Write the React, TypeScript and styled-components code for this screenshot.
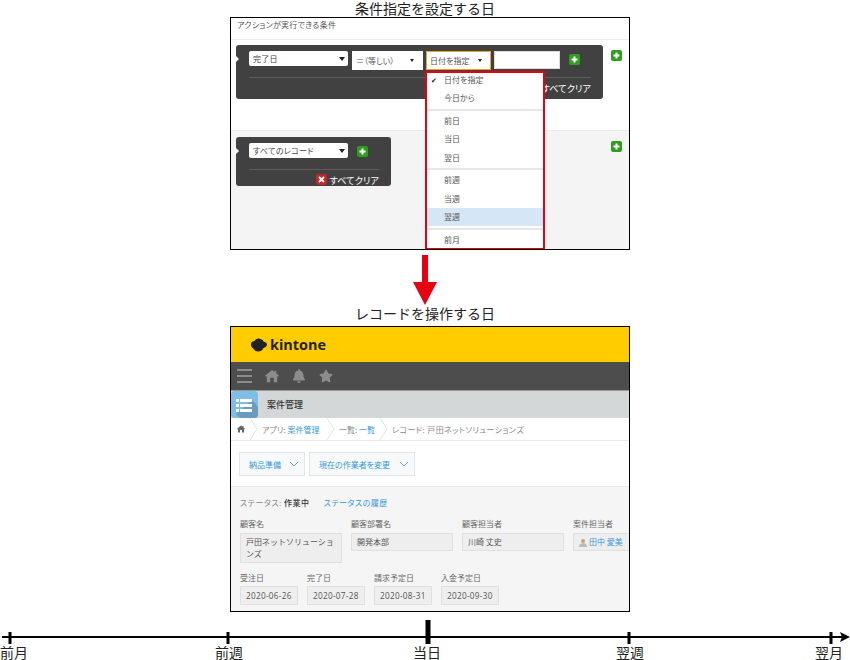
import React from 'react';
import styled, { createGlobalStyle } from 'styled-components';
import { FaBell, FaStar } from 'react-icons/fa';

const GlobalStyle = createGlobalStyle`
  html, body {
    margin: 0;
    padding: 0;
    background: #fff;
  }

  body {
    width: 850px;
    height: 660px;
    overflow: hidden;
    font-family: 'Noto Sans CJK JP', 'Noto Sans', sans-serif;
    font-feature-settings: 'palt';
  }
`;

const Page = styled.div`
  width: 850px;
  height: 660px;
  display: flex;
  flex-direction: column;
  align-items: center;
`;

const Title = styled.div`
  height: 17px;
  line-height: 17px;
  font-size: 14px;
  color: #222;
  font-feature-settings: normal;
`;

const Frame = styled.div<{ $height: number; $top?: number }>`
  position: relative;
  flex: none;
  box-sizing: border-box;
  width: 400px;
  height: ${(p) => p.$height}px;
  margin-top: ${(p) => p.$top ?? 0}px;
  margin-left: 10px;
  border: 1px solid #000;
  overflow: hidden;
  font-size: 8px;
  color: #555;
`;

const ConditionHeader = styled.div`
  height: 22px;
  padding-left: 6px;
  line-height: 12px;
  padding-top: 1px;
  box-sizing: border-box;
  border-bottom: 1px solid #ececec;
  letter-spacing: 0.25px;
`;

const ConditionSection = styled.div<{ $height: number; $grey?: boolean }>`
  box-sizing: border-box;
  height: ${(p) => p.$height}px;
  display: flex;
  align-items: flex-start;
  justify-content: space-between;
  padding: ${(p) => (p.$grey ? '6px 7px 0 5px' : '5px 7px 0 5px')};
  background: ${(p) => (p.$grey ? '#f4f4f4' : '#fff')};
  border-top: ${(p) => (p.$grey ? '1px solid #ececec' : 'none')};
`;

const DarkPanel = styled.div<{ $width: number; $height: number }>`
  position: relative;
  box-sizing: border-box;
  width: ${(p) => p.$width}px;
  height: ${(p) => p.$height}px;
  padding: 6px 12px 0 13px;
  background: #414141;
  border-radius: 3px;

  &::before {
    content: '';
    position: absolute;
    left: 0;
    top: 11px;
    border-left: 3px solid #fff;
    border-top: 3px solid transparent;
    border-bottom: 3px solid transparent;
  }
`;

const FilterRow = styled.div`
  display: flex;
  align-items: flex-start;
  height: 26px;
`;

const FieldSelect = styled.div<{ $width: number; $margin?: number }>`
  box-sizing: border-box;
  width: ${(p) => p.$width}px;
  height: 15px;
  margin-right: ${(p) => p.$margin ?? 0}px;
  padding: 0 3px 0 4px;
  display: flex;
  align-items: center;
  justify-content: space-between;
  background: #fff;
  border-radius: 2px;
  color: #444;
  line-height: 13px;
  letter-spacing: 0.3px;
`;

const DropArrow = styled.span<{ $size?: number }>`
  width: 0;
  height: 0;
  border-left: ${(p) => p.$size ?? 3}px solid transparent;
  border-right: ${(p) => p.$size ?? 3}px solid transparent;
  border-top: ${(p) => (p.$size ?? 3) + 1}px solid #222;
`;

const OpSelect = styled.div<{ $width: number; $margin: number; $active?: boolean }>`
  box-sizing: border-box;
  width: ${(p) => p.$width}px;
  height: 19px;
  margin-right: ${(p) => p.$margin}px;
  padding: 0 8px 0 3px;
  display: flex;
  align-items: center;
  justify-content: space-between;
  background: #fff;
  border: 1px solid ${(p) => (p.$active ? '#e6a92e' : '#fff')};
  color: #555;
`;

const ValueInput = styled.div`
  box-sizing: border-box;
  width: 66px;
  height: 18px;
  margin-right: 9px;
  background: #fff;
  border: 1px solid #ddd;
`;

const IconSquare = styled.span<{ $color: string; $size?: number; $top?: number }>`
  flex: none;
  display: inline-flex;
  align-items: center;
  justify-content: center;
  width: ${(p) => p.$size ?? 11}px;
  height: ${(p) => p.$size ?? 11}px;
  margin-top: ${(p) => p.$top ?? 0}px;
  border-radius: 2px;
  background: ${(p) => p.$color};
`;

const PanelDivider = styled.div`
  height: 1px;
  background: #5e5e5e;
`;

const ClearRow = styled.div`
  display: flex;
  justify-content: flex-end;
  align-items: center;
  gap: 3px;
  height: 19px;
  padding-right: 0;
  font-size: 9.2px;
  color: #fff;
`;

const Menu = styled.div`
  position: absolute;
  left: 194px;
  top: 53px;
  box-sizing: border-box;
  width: 120px;
  height: 179px;
  background: #fff;
  border: 2px solid #e60012;
  overflow: hidden;
`;

const MenuList = styled.div`
  margin-top: -2px;
`;

const MenuItem = styled.div<{ $hover?: boolean }>`
  position: relative;
  height: 18.3px;
  line-height: 18px;
  padding-left: 17px;
  background: ${(p) => (p.$hover ? '#d5e7f6' : 'transparent')};
  color: #555;
`;

const MenuCheck = styled.span`
  position: absolute;
  left: 4px;
  top: 0;
  color: #222;
  font-size: 7px;
`;

const MenuSeparator = styled.div`
  height: 2px;
  margin: 1.25px 0;
  background: #e6e6e6;
`;

const ArrowBox = styled.svg`
  display: block;
  flex: none;
  margin-top: 5px;
`;

const TopBar = styled.div`
  height: 35px;
  padding-left: 19px;
  display: flex;
  align-items: center;
  gap: 3px;
  background: #ffcc00;
`;

const Wordmark = styled.span`
  font-family: 'Open Sans', sans-serif;
  font-size: 14.4px;
  font-weight: 700;
  color: #222;
`;

const NavBar = styled.div`
  height: 28px;
  padding-left: 6px;
  display: flex;
  align-items: center;
  gap: 13px;
  background: #4d4d4d;
  border-bottom: 1px solid #999;
  color: #8c8c8c;
`;

const AppBar = styled.div`
  position: relative;
  height: 27px;
  display: flex;
  align-items: center;
  padding-left: 36px;
  background: #d3d7d8;
  font-size: 9px;
  font-weight: 500;
  color: #333;
`;

const AppIcon = styled.svg`
  position: absolute;
  left: 0;
  top: 0;
`;

const Breadcrumb = styled.div`
  box-sizing: border-box;
  height: 23px;
  display: flex;
  align-items: center;
  padding-left: 6px;
  gap: 0;
  border-bottom: 1px solid #e8e8e8;
  background: #fff;
  color: #888;
`;

const HomeCrumb = styled.span`
  display: flex;
  width: 12px;
`;

const Crumb = styled.span<{ $width: number; $spacing?: number }>`
  box-sizing: border-box;
  width: ${(p) => p.$width}px;
  padding-left: 3px;
  white-space: nowrap;
  letter-spacing: ${(p) => p.$spacing ?? 0}px;
`;

const Link = styled.span`
  color: #3498db;
`;

const ActionBar = styled.div`
  box-sizing: border-box;
  height: 46px;
  padding: 11px 0 0 8px;
  display: flex;
  align-items: flex-start;
  gap: 4px;
  background: #fff;
  border-bottom: 1px solid #eaeaea;
`;

const ActionButton = styled.div<{ $width: number }>`
  box-sizing: border-box;
  width: ${(p) => p.$width}px;
  height: 24px;
  padding: 0 5px 0 9px;
  display: flex;
  align-items: center;
  justify-content: space-between;
  background: #f7f9fa;
  border: 1px solid #e3e7e8;
  color: #3498db;
`;

const RecordBody = styled.div`
  height: 124px;
  padding: 9px 0 0 9px;
  background: #f5f5f5;
`;

const Status = styled.div`
  height: 22px;
  line-height: 14px;
  display: flex;
  gap: 14px;
  color: #888;
  letter-spacing: 0.5px;
`;

const StatusValue = styled.b`
  color: #333;
  font-weight: 500;
`;

const FieldRow = styled.div<{ $height: number }>`
  display: flex;
  align-items: flex-start;
  gap: 9px;
  height: ${(p) => p.$height}px;
`;

const Field = styled.div`
  flex: none;
`;

const FieldLabel = styled.div`
  height: 12px;
  line-height: 12px;
  white-space: nowrap;
  color: #666;
`;

const FieldValue = styled.div<{ $width: number }>`
  box-sizing: border-box;
  width: ${(p) => p.$width}px;
  margin-top: 3px;
  padding: 2px 5px;
  line-height: 12px;
  background: #eeeeee;
  border: 1px solid #e0e0e0;
  color: #555;
  font-feature-settings: normal;
`;

const DateValue = styled.div`
  box-sizing: border-box;
  width: 58px;
  height: 19px;
  margin-top: 2px;
  padding: 0 5px;
  line-height: 17px;
  background: #eeeeee;
  border: 1px solid #e0e0e0;
  color: #555;
  font-family: 'Open Sans', sans-serif;
  font-size: 8.2px;
  letter-spacing: 0.3px;
  white-space: nowrap;
`;

const Avatar = styled.svg`
  vertical-align: -2px;
  margin-right: 2px;
`;

const Axis = styled.svg`
  display: block;
  flex: none;
  margin-top: 8px;
`;

const AxisLabels = styled.div`
  width: 850px;
  height: 16px;
  display: flex;
  font-size: 14px;
  line-height: 16px;
  color: #222;
  font-feature-settings: normal;
`;

const AxisLabel = styled.span<{ $left: number }>`
  margin-left: ${(p) => p.$left}px;
  width: 28px;
  white-space: nowrap;
`;

const Plus = () => (
  <svg width='7' height='7' viewBox='0 0 7 7'>
    <path d='M2.5 0.5h2v2h2v2h-2v2h-2v-2h-2v-2h2z' fill='#fff' />
  </svg>
);

const Chevron = ({ color = '#5aa7e0' }: { color?: string }) => (
  <svg width='10' height='6' viewBox='0 0 10 6'>
    <path d='M1 1l4 4 4-4' fill='none' stroke={color} strokeWidth='1' />
  </svg>
);

const CrumbSeparator = () => (
  <svg width='10' height='22' viewBox='0 0 10 22'>
    <path d='M1 0l7 11-7 11' fill='none' stroke='#e3e3e3' strokeWidth='1' />
  </svg>
);

const HomeIcon = ({ size, color }: { size: number; color: string }) => (
  <svg width={size} height={size} viewBox='0 0 16 16'>
    <path
      d='M8 1l3 2.4V2h2v3l3 2.6-1 1.2-1-.8V15h-4v-5H6v5H2V8l-1 .8-1-1.2z'
      fill={color}
    />
  </svg>
);

const MENU: (string | null)[] = [
  '日付を指定',
  '今日から',
  null,
  '前日',
  '当日',
  '翌日',
  null,
  '前週',
  '当週',
  '翌週',
  null,
  '前月',
];

const AXIS_TICKS = [
  { x: 10, w: 3, top: 12 },
  { x: 228, w: 3, top: 12 },
  { x: 428, w: 5, top: 0 },
  { x: 629, w: 3, top: 12 },
  { x: 831, w: 3, top: 12 },
];

const AXIS_LABELS = [
  { text: '前月', left: 0 },
  { text: '前週', left: 187 },
  { text: '当日', left: 170 },
  { text: '翌週', left: 175 },
  { text: '翌月', left: 171 },
];

const FIELDS = [
  { label: '顧客名', value: '戸田ネットソリューションズ' },
  { label: '顧客部署名', value: '開発本部' },
  { label: '顧客担当者', value: '川崎 丈史' },
];

const DATES = [
  { label: '受注日', value: '2020-06-26' },
  { label: '完了日', value: '2020-07-28' },
  { label: '請求予定日', value: '2020-08-31' },
  { label: '入金予定日', value: '2020-09-30' },
];

const ConditionFrame = () => (
  <Frame $height={233}>
    <ConditionHeader>アクションが実行できる条件</ConditionHeader>
    <ConditionSection $height={90}>
      <DarkPanel $width={367} $height={54}>
        <FilterRow>
          <FieldSelect $width={99} $margin={4}>
            完了日
            <DropArrow />
          </FieldSelect>
          <OpSelect $width={71} $margin={3}>
            ＝（等しい）
            <DropArrow $size={2} />
          </OpSelect>
          <OpSelect $width={65} $margin={3} $active>
            日付を指定
            <DropArrow $size={2} />
          </OpSelect>
          <ValueInput />
          <IconSquare $color='#2f9e1f' $top={3}>
            <Plus />
          </IconSquare>
        </FilterRow>
        <PanelDivider />
        <ClearRow>すべてクリア</ClearRow>
      </DarkPanel>
      <IconSquare $color='#2f9e1f' $top={5}>
        <Plus />
      </IconSquare>
    </ConditionSection>
    <ConditionSection $height={119} $grey>
      <DarkPanel $width={155} $height={49}>
        <FilterRow>
          <FieldSelect $width={99} $margin={9}>
            すべてのレコード
            <DropArrow />
          </FieldSelect>
          <IconSquare $color='#2f9e1f' $top={3}>
            <Plus />
          </IconSquare>
        </FilterRow>
        <PanelDivider />
        <ClearRow>
          <IconSquare $color='#c0272d'>
            <svg width='7' height='7' viewBox='0 0 7 7'>
              <path d='M1 1l5 5M6 1l-5 5' stroke='#fff' strokeWidth='1.8' />
            </svg>
          </IconSquare>
          すべてクリア
        </ClearRow>
      </DarkPanel>
      <IconSquare $color='#2f9e1f' $top={4}>
        <Plus />
      </IconSquare>
    </ConditionSection>
    <Menu>
      <MenuList>
        {MENU.map((item, i) =>
          item === null ? (
            <MenuSeparator key={i} />
          ) : (
            <MenuItem key={i} $hover={i === 9}>
              {i === 0 && <MenuCheck>✔</MenuCheck>}
              {item}
            </MenuItem>
          ),
        )}
      </MenuList>
    </Menu>
  </Frame>
);

const RecordFrame = () => (
  <Frame $height={286} $top={4}>
    <TopBar>
      <svg width='17' height='14' viewBox='0 0 17 14'>
        <path
          d='M1 6c0-2 2-3 3.500-3C5.500 1 8 0 10 1c2 0 3 1 3.500 2.500C15.500 4 17 5 17 6.500c0 2-2 3-3.500 3.500-1 2.500-3 3.500-5.500 3.500-2.500 0-4-1.500-4.500-3C2 10 0.500 8 1 6z'
          fill='#222'
        />
      </svg>
      <Wordmark>kintone</Wordmark>
    </TopBar>
    <NavBar>
      <svg width='15' height='16' viewBox='0 0 15 16'>
        <path d='M0 2h15M0 8h15M0 14h15' stroke='#8c8c8c' strokeWidth='2' />
      </svg>
      <HomeIcon size={14} color='#8c8c8c' />
      <FaBell size={14} />
      <FaStar size={14} />
    </NavBar>
    <AppBar>
      <AppIcon width='27' height='27' viewBox='0 0 27 27'>
        <path d='M0 4a4 4 0 0 1 4-4h19a4 4 0 0 1 4 4v19a4 4 0 0 1-4 4H4a4 4 0 0 1-4-4z' fill='#7dbde6' />
        <path d='M21 9l6 7v7a4 4 0 0 1-4 4H9l-4-4z' fill='#6a9cc0' />
        <path d='M5 8h3v3H5zM9 8h12v3H9zM5 13h3v3H5zM9 13h12v3H9zM5 18h3v3H5zM9 18h12v3H9z' fill='#fff' />
      </AppIcon>
      案件管理
    </AppBar>
    <Breadcrumb>
      <HomeCrumb>
        <HomeIcon size={8} color='#666' />
      </HomeCrumb>
      <CrumbSeparator />
      <Crumb $width={67}>
        アプリ: <Link>案件管理</Link>
      </Crumb>
      <CrumbSeparator />
      <Crumb $width={43}>
        一覧: <Link>一覧</Link>
      </Crumb>
      <CrumbSeparator />
      <Crumb $width={145} $spacing={0.4}>
        レコード: 戸田ネットソリューションズ
      </Crumb>
    </Breadcrumb>
    <ActionBar>
      <ActionButton $width={66}>
        納品準備
        <Chevron />
      </ActionButton>
      <ActionButton $width={106}>
        現在の作業者を変更
        <Chevron />
      </ActionButton>
    </ActionBar>
    <RecordBody>
      <Status>
        <span>
          ステータス: <StatusValue>作業中</StatusValue>
        </span>
        <Link>ステータスの履歴</Link>
      </Status>
      <FieldRow $height={54}>
        {FIELDS.map((f) => (
          <Field key={f.label}>
            <FieldLabel>{f.label}</FieldLabel>
            <FieldValue $width={102}>{f.value}</FieldValue>
          </Field>
        ))}
        <Field>
          <FieldLabel>案件担当者</FieldLabel>
          <FieldValue $width={70}>
            <Avatar width='8' height='9' viewBox='0 0 8 9'>
              <circle cx='4' cy='3' r='2' fill='#c9a27e' />
              <path d='M0 9c0-3 2-4 4-4s4 1 4 4z' fill='#bbb' />
            </Avatar>
            <Link>田中 愛美</Link>
          </FieldValue>
        </Field>
      </FieldRow>
      <FieldRow $height={32}>
        {DATES.map((d) => (
          <Field key={d.label}>
            <FieldLabel>{d.label}</FieldLabel>
            <DateValue>{d.value}</DateValue>
          </Field>
        ))}
      </FieldRow>
    </RecordBody>
  </Frame>
);

const App: React.FC = () => (
  <Page>
    <GlobalStyle />
    <Title>条件指定を設定する日</Title>
    <ConditionFrame />
    <ArrowBox width='26' height='50' viewBox='0 0 26 50'>
      <path d='M10 0h6v27h9L13 50 1 27h9z' fill='#e60012' />
    </ArrowBox>
    <Title>レコードを操作する日</Title>
    <RecordFrame />
    <Axis width='850' height='24' viewBox='0 0 850 24'>
      <path d='M2 17h842' stroke='#000' strokeWidth='2' />
      <path d='M840 12l10 5-10 5 2-5z' fill='#000' />
      {AXIS_TICKS.map((t) => (
        <rect key={t.x} x={t.x - t.w / 2} y={t.top} width={t.w} height={24 - t.top} fill='#000' />
      ))}
    </Axis>
    <AxisLabels>
      {AXIS_LABELS.map((l) => (
        <AxisLabel key={l.text} $left={l.left}>
          {l.text}
        </AxisLabel>
      ))}
    </AxisLabels>
  </Page>
);

export default App;
